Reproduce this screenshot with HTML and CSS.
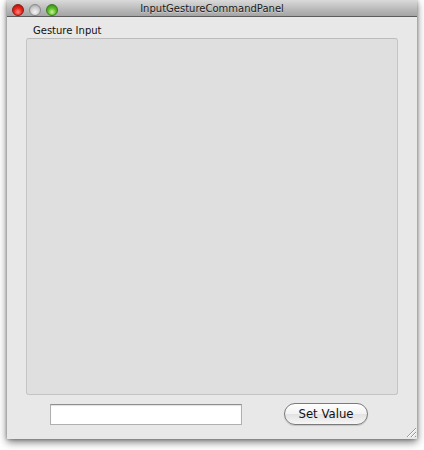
FILE: index.html
```html
<!DOCTYPE html>
<html>
<head>
<meta charset="utf-8">
<link rel="stylesheet" href="styles.css">
</head>
<body>
<div class="window">
  <div class="titlebar">
    <div class="lights">
      <span class="light red"></span>
      <span class="light gray"></span>
      <span class="light green"></span>
    </div>
    <div class="title">InputGestureCommandPanel</div>
  </div>
  <div class="content">
    <div class="group-label">Gesture Input</div>
    <div class="group-box"></div>
    <div class="controls">
      <input class="field" type="text">
      <button class="btn">Set Value</button>
    </div>
  </div>
  <svg class="grip" width="12" height="12" viewBox="0 0 12 12">
    <path d="M11 2 L2 11 M11 6 L6 11 M11 10 L10 11" stroke="#999" stroke-width="1"/>
    <path d="M11 3 L3 11 M11 7 L7 11" stroke="#fff" stroke-width="1"/>
  </svg>
</div>
</body>
</html>
```
FILE: styles.css
```css
html, body {
  margin: 0;
  padding: 0;
  background: #ffffff;
}
body {
  width: 424px;
  height: 450px;
  overflow: hidden;
}
.window {
  position: relative;
  margin-left: 7px;
  width: 410px;
  height: 439px;
  background: #e8e8e8;
  display: flex;
  flex-direction: column;
  box-shadow: 0 3px 8px rgba(0,0,0,0.55), 0 0 3px rgba(0,0,0,0.3);
  font-family: "DejaVu Sans", "Liberation Sans", sans-serif;
}
.titlebar {
  height: 16px;
  border-bottom: 1px solid #5c5c5c;
  background: linear-gradient(#dadada, #b8b8b8 60%, #a4a4a4);
  position: relative;
  display: flex;
  align-items: center;
  justify-content: center;
}
.lights {
  position: absolute;
  left: 5px;
  top: 4px;
  display: flex;
  gap: 5px;
}
.light {
  width: 12px;
  height: 12px;
  border-radius: 50%;
  box-sizing: border-box;
}
.red {
  background: radial-gradient(circle at 50% 70%, #ff8a80 0%, #e8261b 45%, #a10e08 100%);
  border: 1px solid #8a1a14;
}
.gray {
  background: radial-gradient(circle at 50% 70%, #f4f4f4 0%, #cfcfcf 50%, #9a9a9a 100%);
  border: 1px solid #8a8a8a;
}
.green {
  background: radial-gradient(circle at 50% 70%, #c8f59a 0%, #5cbf2a 45%, #2d7a10 100%);
  border: 1px solid #3e7a1e;
}
.title {
  font-size: 10px;
  color: #1a1a1a;
  line-height: 16px;
  margin-top: 2px;
  text-shadow: 0 1px 0 rgba(255,255,255,0.4);
}
.content {
  flex: 1;
  display: flex;
  flex-direction: column;
  padding: 6px 19px 0 19px;
}
.group-label {
  font-size: 10px;
  line-height: 13px;
  color: #111;
  padding-left: 7px;
  padding-top: 1px;
  height: 12px;
}
.group-box {
  margin-top: 2px;
  height: 355px;
  background: #dfdfdf;
  border: 1px solid #c4c4c4;
  border-top-color: #bcbcbc;
  border-radius: 3px;
}
.controls {
  margin-top: 8px;
  display: flex;
  align-items: center;
  height: 22px;
}
.field {
  margin: 0 0 0 24px;
  width: 192px;
  height: 21px;
  box-sizing: border-box;
  border: 1px solid #b0b0b0;
  border-top-color: #8e8e8e;
  background: #fff;
  box-shadow: inset 0 1px 1px rgba(0,0,0,0.12);
  padding: 0;
  outline: none;
}
.btn {
  margin-left: 42px;
  width: 84px;
  height: 22px;
  box-sizing: border-box;
  border: 1px solid #7a7a7a;
  border-radius: 11px;
  background: linear-gradient(#ffffff, #f2f2f2 50%, #e2e2e2 51%, #f6f6f6);
  font-family: "DejaVu Sans", "Liberation Sans", sans-serif;
  font-size: 11.7px;
  color: #111;
  padding: 0;
  line-height: 20px;
  box-shadow: 0 1px 1px rgba(0,0,0,0.15);
}
.grip {
  position: absolute;
  right: 0;
  bottom: 1px;
}
```
